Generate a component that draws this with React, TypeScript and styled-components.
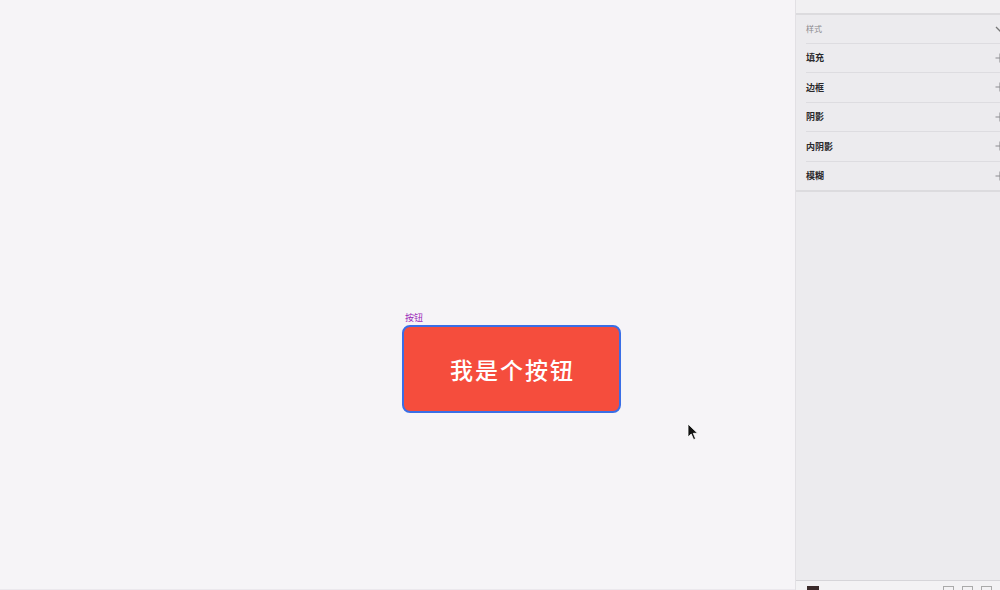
import React from 'react'
import styled, { createGlobalStyle } from 'styled-components'

const Global = createGlobalStyle`
  html, body {
    margin: 0;
    padding: 0;
    width: 1000px;
    height: 590px;
    overflow: hidden;
    background: #f5f3f6;
    font-family: "Noto Sans CJK SC", "Noto Sans", sans-serif;
  }
`

const sections = ['填充', '边框', '阴影', '内阴影', '模糊']

const PlusIcon = () => (
  <PlusSvg width="10" height="10" viewBox="0 0 10 10">
    <path d="M5 0.5 V9.5 M0.5 5 H9.5" stroke="#8c8b90" strokeWidth="1.1" />
  </PlusSvg>
)

const App = () => {
  return (
    <>
      <Global />
      <Screen>
        <Canvas>
          <Artboard>
            <Layer>
              <LayerName>按钮</LayerName>
              <Button>我是个按钮</Button>
            </Layer>
          </Artboard>
          <Cursor width="12" height="18" viewBox="0 0 12 18">
            <path d="M1 1 L1 14 L4.2 11 L6.6 16.6 L8.6 15.7 L6.3 10.3 L10.6 10.3 Z" fill="#111" stroke="#fff" strokeWidth="0.8" />
          </Cursor>
        </Canvas>
        <Inspector>
          <TopStrip />
          <StyleHeader>
            <HeaderLabel>样式</HeaderLabel>
            <Chevron width="10" height="10" viewBox="0 0 10 10">
              <path d="M1 3 L5 7 L9 3" fill="none" stroke="#777" strokeWidth="1.3" />
            </Chevron>
          </StyleHeader>
          {sections.map((s, i) => (
            <Section key={s} last={i === sections.length - 1}>
              <SectionLabel>{s}</SectionLabel>
              <PlusIcon />
            </Section>
          ))}
          <Filler />
          <BottomBar>
            <Swatch />
            <Spacer />
            <Tool />
            <Tool />
            <Tool />
          </BottomBar>
        </Inspector>
      </Screen>
    </>
  )
}

export default App

const Screen = styled.div`
  width: 1000px;
  height: 590px;
  display: flex;
`

const Canvas = styled.div`
  position: relative;
  flex: 1;
  background: #f6f4f7;
  display: flex;
  flex-direction: column;
  border-bottom: 1px solid #ebe8ed;
`

const Artboard = styled.div`
  padding: 312px 0 0 402px;
`

const Layer = styled.div`
  display: flex;
  flex-direction: column;
  width: 219px;
`

const LayerName = styled.div`
  font-size: 9px;
  line-height: 11px;
  color: #9a1fb8;
  padding-left: 3px;
  margin-bottom: 2px;
`

const Button = styled.div`
  box-sizing: border-box;
  width: 219px;
  height: 88px;
  border: 2px solid #3a6ee6;
  border-radius: 8px;
  background: #f54d3d;
  color: #fff;
  font-size: 23px;
  font-weight: 500;
  letter-spacing: 2px;
  padding-left: 2px;
  display: flex;
  align-items: center;
  justify-content: center;
`

const Cursor = styled.svg`
  position: absolute;
  left: 687px;
  top: 423px;
`

const Inspector = styled.div`
  width: 204px;
  background: #ecebee;
  border-left: 1px solid #e2e0e4;
  display: flex;
  flex-direction: column;
  overflow: hidden;
`

const TopStrip = styled.div`
  height: 13px;
  background: #f1f0f2;
  border-bottom: 2px solid #dcdbde;
`

const StyleHeader = styled.div`
  height: 27.5px;
  display: flex;
  align-items: center;
  justify-content: space-between;
  margin-left: 10px;
  border-bottom: 1px solid #dddce0;
`

const HeaderLabel = styled.span`
  font-size: 8px;
  color: #8a898d;
`

const Chevron = styled.svg`
  margin-right: -5px;
`

const Section = styled.div<{ last: boolean }>`
  height: 28.5px;
  display: flex;
  align-items: center;
  justify-content: space-between;
  margin-left: ${(p) => (p.last ? '0' : '10px')};
  padding-left: ${(p) => (p.last ? '10px' : '0')};
  border-bottom: ${(p) => (p.last ? '2px solid #dcdbde' : '1px solid #dddce0')};
`

const SectionLabel = styled.span`
  font-size: 9px;
  font-weight: 700;
  color: #2a292c;
`

const PlusSvg = styled.svg`
  margin-right: -5px;
`

const Filler = styled.div`
  flex: 1;
`

const BottomBar = styled.div`
  height: 9px;
  border-top: 1px solid #d6d5d9;
  background: #f3f2f4;
  display: flex;
  align-items: flex-end;
  gap: 8px;
  padding: 0 8px 0 11px;
`

const Swatch = styled.div`
  width: 12px;
  height: 4px;
  background: #3a2a2a;
`

const Spacer = styled.div`
  flex: 1;
`

const Tool = styled.div`
  width: 9px;
  height: 3px;
  border: 1px solid #aaa;
  border-bottom: none;
`
